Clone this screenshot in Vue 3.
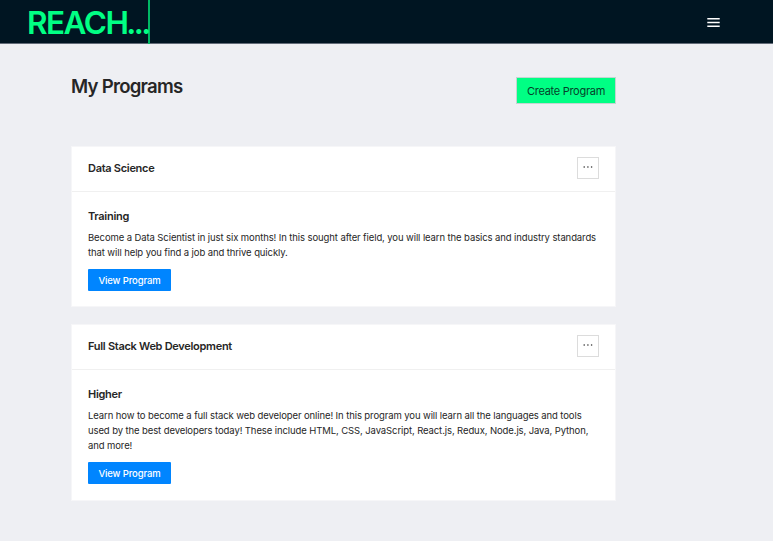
<script setup>
const programs = [
  {
    name: 'Data Science',
    type: 'Training',
    lines: [
      'Become a Data Scientist in just six months! In this sought after field, you will learn the basics and industry standards',
      'that will help you find a job and thrive quickly.'
    ]
  },
  {
    name: 'Full Stack Web Development',
    type: 'Higher',
    lines: [
      'Learn how to become a full stack web developer online! In this program you will learn all the languages and tools',
      'used by the best developers today! These include HTML, CSS, JavaScript, React.js, Redux, Node.js, Java, Python,',
      'and more!'
    ]
  }
]
</script>

<template>
  <div class="page">
    <header class="bar">
      <div class="logo">REACH<span class="dots">...</span></div>
      <button class="menu" aria-label="Menu">
        <svg width="13" height="9" viewBox="0 0 13 9">
          <path d="M.3 0H12.7V1.5H.3zM.3 3.8H12.7V5.2H.3zM.3 7.5H12.7V9H.3z" fill="#fff" />
        </svg>
      </button>
    </header>
    <main class="content">
      <div class="heading">
        <h1>My Programs</h1>
        <button class="create">Create Program</button>
      </div>
      <section v-for="p in programs" :key="p.name" class="card">
        <div class="card-head">
          <h2>{{ p.name }}</h2>
          <button class="more" aria-label="More">
            <svg width="10" height="4" viewBox="0 0 10 4" fill="#333">
              <circle cx="1.2" cy="2" r=".8" />
              <circle cx="4.9" cy="2" r=".8" />
              <circle cx="8.6" cy="2" r=".8" />
            </svg>
          </button>
        </div>
        <div class="card-body">
          <h3>{{ p.type }}</h3>
          <p><span v-for="l in p.lines" :key="l" class="line">{{ l }}</span></p>
          <button class="view">View Program</button>
        </div>
      </section>
    </main>
  </div>
</template>

<style>
body {
  background: #eeeff3;
}
</style>

<style scoped>
.page {
  min-height: 541px;
  background: #eeeff3;
  color: #262626;
  font-family: Inter, "Liberation Sans", sans-serif;
}
.page * {
  box-sizing: border-box;
}
button {
  font-family: inherit;
  padding: 0;
}
.bar {
  height: 44px;
  background: #001522;
  border-bottom: 1px solid #626b78;
  display: flex;
  justify-content: space-between;
  padding: 0 53px 0 27px;
}
.logo {
  width: 123px;
  height: 44px;
  padding-top: 1px;
  border-right: 2px solid #00b865;
  color: #00ff84;
  font-size: 31.5px;
  font-weight: 600;
  line-height: 44px;
  letter-spacing: -1.5px;
  white-space: nowrap;
}
.dots {
  margin-left: -1.3px;
  letter-spacing: -2.5px;
}
.menu {
  border: 0;
  background: none;
  height: 45px;
  display: flex;
  align-items: center;
}
.content {
  width: 545px;
  margin-left: 71px;
}
.heading {
  display: flex;
  justify-content: space-between;
  padding-top: 33px;
  height: 102px;
}
h1 {
  margin: 0;
  font-size: 18.6px;
  font-weight: 600;
  line-height: 19px;
  letter-spacing: -0.75px;
}
.create {
  width: 100px;
  height: 27px;
  border: 1px solid #c3d5d1;
  background: #00ff84;
  color: #063f2a;
  font-size: 11px;
  letter-spacing: -0.28px;
}
.card {
  background: #fff;
  border: 1px solid #f6f6f8;
  margin-bottom: 17px;
}
.card-head {
  display: flex;
  align-items: center;
  justify-content: space-between;
  height: 45px;
  padding: 0 16px 2px;
  border-bottom: 1px solid #f0f0f0;
}
h2, h3 {
  margin: 0;
  font-size: 11px;
  font-weight: 600;
  line-height: 17px;
  letter-spacing: -0.29px;
}
h2 {
  padding-top: 1px;
}
.more {
  width: 22px;
  height: 22px;
  border: 1px solid #dcdcdc;
  background: #fff;
  display: flex;
  align-items: center;
  justify-content: center;
  padding-bottom: 2px;
}
.card-body {
  padding: 16px 16px 15.4px;
}
h3 {
  margin-bottom: 5px;
}
p {
  margin: 0 0 9px;
  font-size: 9.5px;
  line-height: 15px;
  letter-spacing: -0.1px;
}
.line {
  display: block;
  white-space: nowrap;
}
.view {
  display: block;
  width: 83px;
  height: 22px;
  border: 0;
  border-radius: 1px;
  background: #0085ff;
  color: #fff;
  font-size: 9.5px;
  font-weight: 500;
  letter-spacing: -0.13px;
}
</style>
